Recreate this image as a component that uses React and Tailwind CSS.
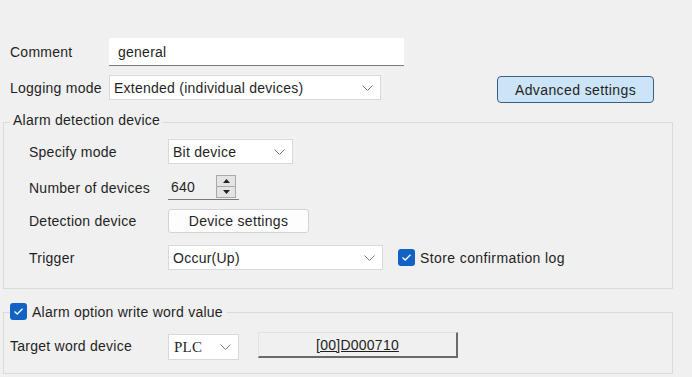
import React from "react";

function Chevron() {
    return (
        <svg width="11" height="6" viewBox="0 0 11 6" className="shrink-0">
            <path d="M0.5 0.5 L5.5 5.5 L10.5 0.5" fill="none" stroke="#7a7a7a" strokeWidth="1" />
        </svg>
    );
}

function Select({ value, className, textClass = "" }) {
    return (
        <div className={`flex items-center justify-between bg-white border border-[#d9d9d9] pl-[4px] pr-[7px] ${className}`}>
            <span className={textClass}>{value}</span>
            <Chevron />
        </div>
    );
}

function Check() {
    return (
        <span className="w-[17px] h-[17px] rounded-[3px] bg-[#1262c3] flex items-center justify-center shrink-0">
            <svg width="11" height="9" viewBox="0 0 11 9">
                <path d="M1.5 4.6 L4.2 7 L9.5 1.8" fill="none" stroke="white" strokeWidth="1.3" />
            </svg>
        </span>
    );
}

function Spinner() {
    return (
        <div className="flex flex-col w-[20px] h-[23px] border border-[#a9a9a9] bg-[#e4e4e4] ml-auto mr-[3px] self-start">
            <div className="flex-1 flex items-center justify-center border-b border-[#a9a9a9]">
                <svg width="7" height="4" viewBox="0 0 7 4"><path d="M0 4 L3.5 0 L7 4 Z" fill="#222" /></svg>
            </div>
            <div className="flex-1 flex items-center justify-center">
                <svg width="7" height="4" viewBox="0 0 7 4"><path d="M0 0 L3.5 4 L7 0 Z" fill="#222" /></svg>
            </div>
        </div>
    );
}

export default function App() {
    return (
        <div className="w-[692px] h-[377px] bg-[#f0f0f0] overflow-hidden text-[14px] text-[#1f1f1f] font-['Liberation_Sans',Arial,sans-serif] tracking-[0.25px] leading-none pt-[38px]">
            <div className="flex items-center h-[28px]">
                <span className="w-[109px] pl-[10px]">Comment</span>
                <div className="w-[295px] h-[28px] bg-white border-b border-[#7a7a7a] flex items-center pl-[9px]">general</div>
            </div>

            <div className="flex items-start mt-[9px]">
                <div className="flex items-center h-[25px]">
                    <span className="w-[109px] pl-[10px]">Logging mode</span>
                    <Select value="Extended (individual devices)" className="w-[272px] h-[25px]" />
                </div>
                <button className="ml-auto mr-[38px] mt-[1px] w-[157px] h-[27px] rounded-[4px] bg-[#cce4f7] border border-[#3d5f7f] text-[14px] tracking-[0.4px] text-[#1f1f1f]">
                    Advanced settings
                </button>
            </div>

            <div className="relative ml-[3px] mt-[19px] w-[670px] h-[167px] border border-[#dadada] pt-[16px] pl-[25px]">
                <span className="absolute left-[6px] top-[-10px] px-[3px] bg-[#f0f0f0]">Alarm detection device</span>

                <div className="flex items-center h-[25px]">
                    <span className="w-[139px]">Specify mode</span>
                    <Select value="Bit device" className="w-[125px] h-[25px]" />
                </div>

                <div className="flex items-center h-[25px] mt-[11px]">
                    <span className="w-[139px]">Number of devices</span>
                    <div className="w-[71px] h-[25px] border-b border-[#7a7a7a] flex items-center pl-[3px]">
                        <span>640</span>
                        <Spinner />
                    </div>
                </div>

                <div className="flex items-center h-[24px] mt-[9px]">
                    <span className="w-[139px]">Detection device</span>
                    <button className="w-[141px] h-[24px] rounded-[3px] bg-[#fdfdfd] border border-[#d3d3d3] text-[14px] tracking-[0.3px] text-[#1f1f1f]">
                        Device settings
                    </button>
                </div>

                <div className="flex items-center h-[25px] mt-[12px]">
                    <span className="w-[139px]">Trigger</span>
                    <Select value="Occur(Up)" className="w-[215px] h-[25px]" />
                    <span className="ml-[15px]"><Check /></span>
                    <span className="ml-[5px] tracking-[0.4px]">Store confirmation log</span>
                </div>
            </div>

            <div className="relative ml-[3px] mt-[23px] w-[670px] h-[62px] border border-[#dadada] pt-[19px] pl-[6px]">
                <div className="absolute left-[6px] top-[-10px] flex items-center gap-[5px] bg-[#f0f0f0] pr-[4px]">
                    <Check />
                    <span>Alarm option write word value</span>
                </div>

                <div className="flex items-center h-[28px]">
                    <span className="w-[158px]">Target word device</span>
                    <Select value="PLC" className="w-[71px] h-[26px] self-end" textClass="font-['Liberation_Serif',serif] text-[15px] pl-[1px]" />
                    <button className="ml-[19px] w-[200px] h-[26px] self-start bg-[#f0f0f0] border-t border-l border-[#e2e2e2] border-r-2 border-b-2 border-r-[#6a6a6a] border-b-[#6a6a6a] text-[14px] text-[#1f1f1f] underline">
                        [00]D000710
                    </button>
                </div>
            </div>
        </div>
    );
}
